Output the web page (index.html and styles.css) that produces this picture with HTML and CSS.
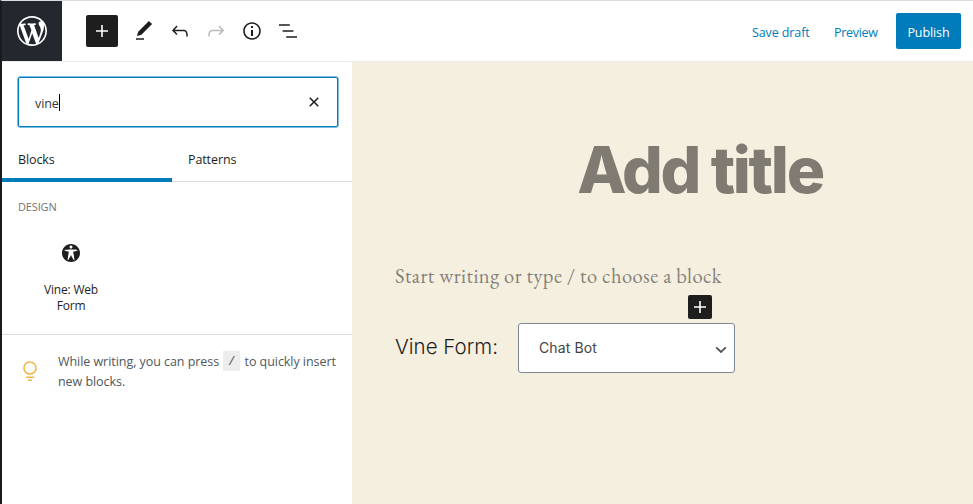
FILE: index.html
```html
<!DOCTYPE html>
<html lang="en">
<head>
<meta charset="utf-8">
<title>Edit Post</title>
<link rel="stylesheet" href="styles.css">
</head>
<body>
<div class="editor">
  <header class="header">
    <a class="logo" aria-label="View posts">
      <svg width="36" height="36" viewBox="-2 -2 24 24"><path d="M20 10c0-5.51-4.49-10-10-10C4.48 0 0 4.49 0 10c0 5.52 4.48 10 10 10 5.51 0 10-4.48 10-10zM7.78 15.37L4.37 6.22c.55-.02 1.17-.08 1.17-.08.5-.06.44-1.13-.06-1.11 0 0-1.45.11-2.37.11-.18 0-.37 0-.58-.01C4.12 2.69 6.87 1.11 10 1.11c2.33 0 4.45.87 6.05 2.34-.68-.11-1.65.39-1.65 1.58 0 .74.45 1.36.9 2.1.35.61.55 1.36.55 2.46 0 1.49-1.4 5-1.4 5l-3.03-8.37c.54-.02.82-.17.82-.17.5-.05.44-1.25-.06-1.22 0 0-1.44.12-2.38.12-.87 0-2.33-.12-2.33-.12-.5-.03-.56 1.2-.06 1.22l.92.08 1.26 3.41zM17.41 10c.24-.64.74-1.87.43-4.25.7 1.29 1.05 2.71 1.05 4.25 0 3.29-1.73 6.24-4.4 7.78.97-2.59 1.94-5.2 2.92-7.78zM6.1 18.09C3.12 16.65 1.11 13.53 1.11 10c0-1.3.23-2.48.72-3.59C3.25 10.3 4.67 14.2 6.1 18.09zm4.03-6.63l2.58 6.98c-.86.29-1.76.45-2.71.45-.79 0-1.57-.11-2.29-.33.81-2.38 1.62-4.74 2.42-7.1z"/></svg>
    </a>
    <div class="toolbar">
      <button class="add" aria-label="Add block"><svg width="24" height="24" viewBox="0 0 24 24"><path d="M18 11.2h-5.2V6h-1.6v5.2H6v1.6h5.2V18h1.6v-5.2H18z"/></svg></button>
      <svg width="24" height="24" viewBox="0 0 24 24"><path d="M20.1 5.1L16.9 2 6.2 12.7l-1.3 4.4 4.5-1.3L20.1 5.1zM4 20.8h8v-1.5H4v1.5z"/></svg>
      <svg width="24" height="24" viewBox="0 0 24 24"><path d="M18.3 11.7c-.6-.6-1.4-.9-2.3-.9H6.7l2.9-3.3-1.1-1-4.5 5L8.5 16l1-1-2.7-2.7H16c.5 0 .9.2 1.3.5 1 1 1 3.4 1 4.5v.3h1.5v-.2c0-1.5 0-4.3-1.5-5.7z"/></svg>
      <svg class="disabled" width="24" height="24" viewBox="0 0 24 24"><path d="M15.6 6.5l-1.1 1 2.9 3.3H8c-.9 0-1.7.3-2.3.9-1.4 1.5-1.4 4.2-1.4 5.6v.2h1.5v-.3c0-1.1 0-3.5 1-4.5.3-.3.7-.5 1.3-.5h9.2L14.5 15l1.1 1.1 4.6-4.6-4.6-5z"/></svg>
      <svg width="24" height="24" viewBox="0 0 24 24"><path d="M12 3.2c-4.8 0-8.8 3.9-8.8 8.8 0 4.8 3.9 8.8 8.8 8.8 4.8 0 8.8-3.9 8.8-8.8 0-4.8-4-8.8-8.8-8.8zm0 16c-4 0-7.2-3.3-7.2-7.2C4.8 8 8 4.8 12 4.8s7.2 3.3 7.2 7.2c0 4-3.2 7.2-7.2 7.2zM11 17h2v-6h-2v6zm0-8h2V7h-2v2z"/></svg>
      <svg width="24" height="24" viewBox="0 0 24 24"><path d="M13.8 5.2H3v1.5h10.8V5.2zm-3.6 12v1.5H21v-1.5H10.2zm7.2-6H6.6v1.5h10.8v-1.5z"/></svg>
    </div>
    <div class="actions">
      <a class="link draft">Save draft</a>
      <a class="link preview">Preview</a>
      <button class="publish">Publish</button>
    </div>
  </header>
  <div class="body">
    <aside class="inserter">
      <div class="search">
        <span class="query">vine</span><span class="caret"></span>
        <svg class="clear" width="24" height="24" viewBox="0 0 24 24"><path d="M12 13.06l3.712 3.713 1.061-1.06L13.061 12l3.712-3.712-1.06-1.06L12 10.938 8.288 7.227l-1.061 1.06L10.939 12l-3.712 3.712 1.06 1.061L12 13.061z"/></svg>
      </div>
      <nav class="tabs">
        <a class="tab active">Blocks</a>
        <a class="tab">Patterns</a>
      </nav>
      <section class="results">
        <h2 class="category">DESIGN</h2>
        <div class="block">
          <svg width="20" height="20" viewBox="0 0 20 20"><path d="M19 10c0-4.97-4.03-9-9-9s-9 4.03-9 9 4.03 9 9 9 9-4.03 9-9zm-9-7.4c.83 0 1.5.67 1.5 1.5s-.67 1.51-1.5 1.51c-.82 0-1.5-.68-1.5-1.51s.68-1.5 1.5-1.5zM3.4 7.36c0-.65 6.6-.76 6.6-.76s6.6.11 6.6.76-4.47 1.4-4.47 1.4 1.69 8.14 1.06 8.38c-.62.24-3.19-5.19-3.19-5.19s-2.56 5.43-3.18 5.19c-.63-.24 1.06-8.38 1.06-8.38S3.4 8.01 3.4 7.36z"/></svg>
          <span class="block-name">Vine: Web<br>Form</span>
        </div>
      </section>
      <div class="tip">
        <svg width="24" height="24" viewBox="0 0 24 24"><path d="M12 15.8c-3.7 0-6.8-3-6.8-6.8s3-6.8 6.8-6.8c3.7 0 6.8 3 6.8 6.8s-3.1 6.8-6.8 6.8zm0-12C9.1 3.8 6.8 6.1 6.8 9s2.4 5.2 5.2 5.2c2.9 0 5.2-2.4 5.2-5.2S14.9 3.8 12 3.8zM8 17.5h8V19H8zM10 20.5h4V22h-4z"/></svg>
        <p class="tip-text">While writing, you can press <kbd>/</kbd> to quickly insert<br>new blocks.</p>
      </div>
    </aside>
    <main class="canvas">
      <h1 class="title">Add title</h1>
      <p class="prompt">Start writing or type / to choose a block</p>
      <button class="insert" aria-label="Add block"><svg width="24" height="24" viewBox="0 0 24 24"><path d="M18 11.2h-5.2V6h-1.6v5.2H6v1.6h5.2V18h1.6v-5.2H18z"/></svg></button>
      <div class="form-row">
        <span class="form-label">Vine Form:</span>
        <div class="select">
          <span class="value">Chat Bot</span>
          <svg width="12" height="8" viewBox="0 0 12 8"><path d="M1.2 1.3L6 6l4.8-4.7"/></svg>
        </div>
      </div>
    </main>
  </div>
</div>
</body>
</html>
```

FILE: styles.css
```css
* { box-sizing: border-box; }
body {
  margin: 0;
  font-family: "Open Sans", "Noto Sans", sans-serif;
  font-size: 12.5px;
  color: #1e1e1e;
  background: #fff;
}
h1, h2, p { margin: 0; font-weight: 400; }
button { border: 0; padding: 0; font: inherit; }
svg { display: block; flex: none; fill: currentColor; }

.editor {
  height: 504px;
  display: flex;
  flex-direction: column;
  border-left: 2px solid #191b1e;
  border-top: 1px solid #dcdcde;
  overflow: hidden;
}
.header {
  height: 61px;
  flex: none;
  display: flex;
  border-bottom: 1px solid #ececec;
}
.logo {
  width: 60px;
  height: 60px;
  display: flex;
  align-items: center;
  justify-content: center;
  background: #23282e;
  color: #fff;
}
.toolbar {
  display: flex;
  align-items: center;
  gap: 12px;
  padding-left: 24px;
}
.add {
  width: 32px;
  height: 32px;
  margin-right: 2px;
  display: flex;
  align-items: center;
  justify-content: center;
  border-radius: 2px;
  background: #1e1e1e;
  color: #fff;
}
.disabled { opacity: .3; }
.actions {
  margin-left: auto;
  display: flex;
  align-items: center;
  padding-right: 12px;
}
.link { color: #007cba; white-space: nowrap; padding-top: 3px; }
.draft { width: 82px; letter-spacing: -.1px; }
.preview { width: 62px; letter-spacing: -.3px; }
.publish {
  width: 65px;
  height: 36px;
  padding-top: 2px;
  border-radius: 2px;
  background: #007cba;
  color: #fff;
  letter-spacing: -.1px;
}

.body { flex: 1; display: flex; min-height: 0; }
.inserter { width: 350px; flex: none; }
.search {
  margin: 15px 14px 0 16px;
  width: 320px;
  height: 50px;
  display: flex;
  align-items: center;
  padding: 0 11px 0 16px;
  border: 1px solid #007cba;
  border-radius: 2px;
  box-shadow: 0 0 0 .5px #007cba;
}
.query { letter-spacing: -.1px; padding-top: 2px; color: #32373c; }
.caret { width: 1px; height: 17px; background: #000; }
.clear { margin-left: auto; }
.tabs {
  height: 55px;
  display: flex;
  border-bottom: 1px solid #ddd;
}
.tab {
  height: 55px;
  padding: 24px 16px 0;
  line-height: 18px;
  font-weight: 500;
  letter-spacing: -.1px;
}
.active { width: 170px; border-bottom: 4px solid #007cba; }
.results { height: 153px; border-bottom: 1px solid #ddd; }
.category {
  padding: 16px 16px 0;
  font-size: 11px;
  line-height: 18px;
  letter-spacing: -.15px;
  color: #757575;
}
.block {
  width: 106px;
  margin: 27px 0 0 16px;
  display: flex;
  flex-direction: column;
  align-items: center;
}
.block-name {
  margin-top: 19px;
  font-size: 12px;
  line-height: 16px;
  letter-spacing: -.2px;
  text-align: center;
}
.tip { display: flex; padding: 16px 16px; color: #f0b849; }
.tip svg { margin-top: 8px; }
.tip-text {
  margin: 1px 0 0 16px;
  line-height: 20px;
  letter-spacing: -.05px;
  color: #50575e;
  white-space: nowrap;
}
kbd {
  display: inline-block;
  width: 17px;
  height: 20px;
  margin: -1px 1px 0;
  vertical-align: top;
  text-align: center;
  font: 12.5px/22px "Liberation Mono", monospace;
  background: #ededed;
}

.canvas {
  flex: 1;
  display: flex;
  flex-direction: column;
  padding: 63px 0 0 43px;
  background: #f5efe0;
}
.title {
  width: 610px;
  height: 90px;
  line-height: 90px;
  font-family: Inter, sans-serif;
  font-size: 64px;
  font-weight: 800;
  letter-spacing: -2.35px;
  text-align: center;
  color: #7f7b73;
}
.prompt {
  margin-top: 49px;
  height: 25px;
  line-height: 24px;
  font-family: "EB Garamond", "Liberation Serif", serif;
  font-size: 20.5px;
  letter-spacing: .45px;
  color: #85827a;
  white-space: nowrap;
}
.insert {
  width: 24px;
  height: 24px;
  margin: 6px 0 0 293px;
  border-radius: 2px;
  background: #1e1e1e;
  color: #fff;
}
.form-row {
  display: flex;
  align-items: center;
  margin-top: 4px;
  font-family: Inter, sans-serif;
}
.form-label {
  width: 123px;
  padding-bottom: 3px;
  font-size: 20.5px;
  font-weight: 300;
  white-space: nowrap;
}
.select {
  width: 217px;
  height: 50px;
  display: flex;
  align-items: center;
  justify-content: space-between;
  padding: 0 7px 0 20px;
  border: 1px solid #7e8993;
  border-radius: 3px;
  background: #fff;
  color: #444;
  font-size: 14px;
}
.value { padding-bottom: 1px; letter-spacing: .1px; }
.select svg { fill: none; stroke: #555; stroke-width: 1.8; margin-top: 4px; }
```
